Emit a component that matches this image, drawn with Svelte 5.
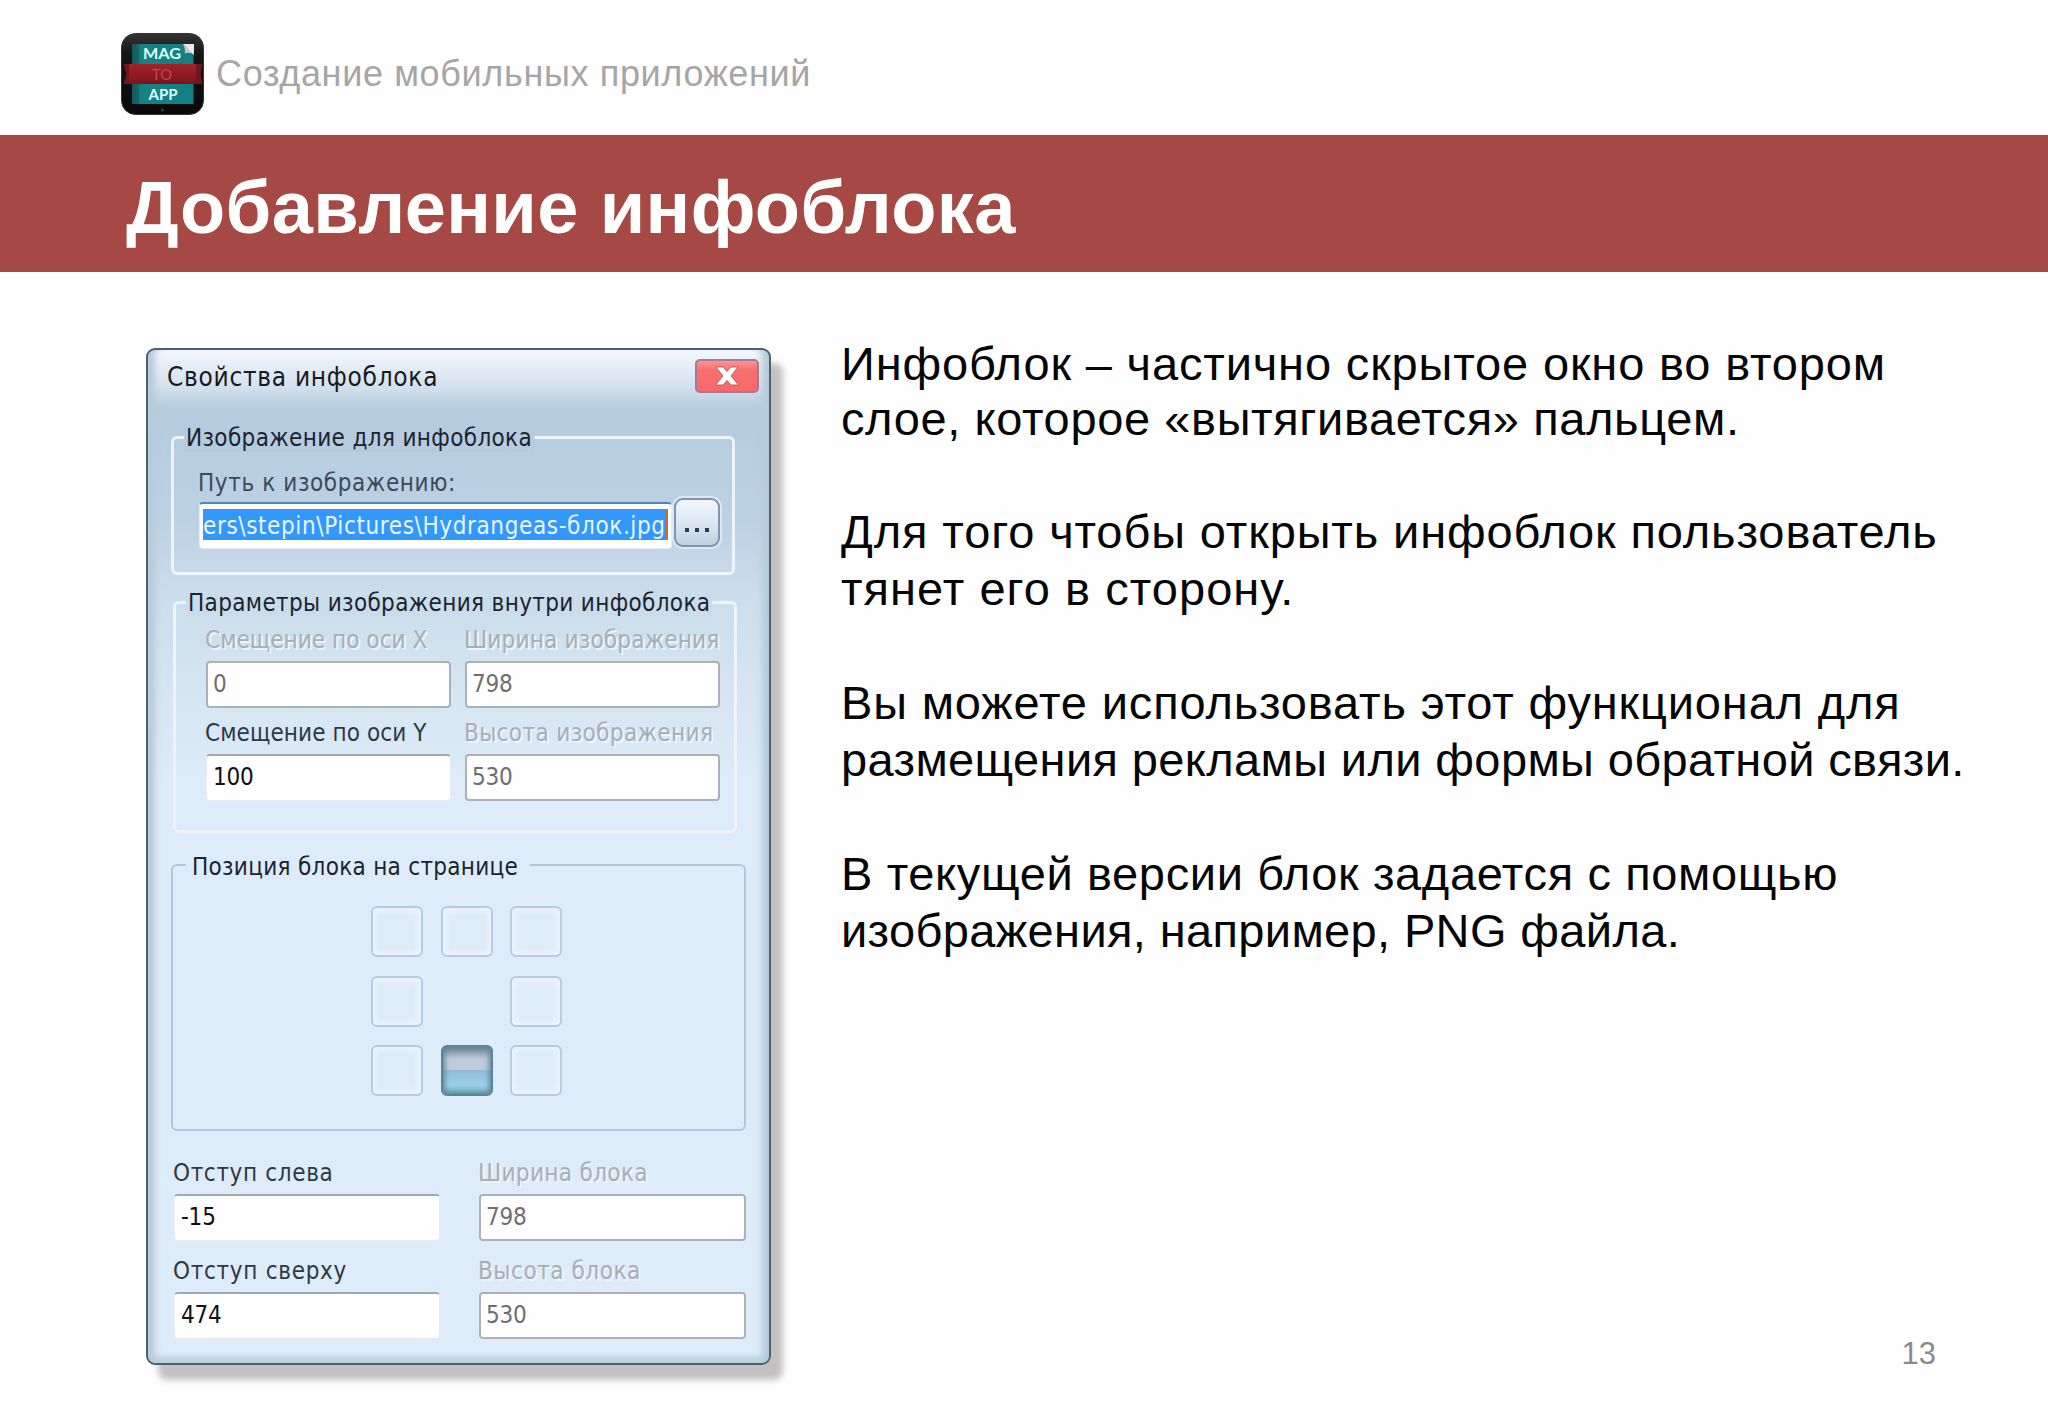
<script lang="ts">
	interface Line {
		text: string;
		tracking: number;
	}

	interface Field {
		label: string;
		value: string;
		tracking: number;
		disabled?: boolean;
	}

	const paragraphs: Line[][] = [
		[
			{ text: 'Инфоблок – частично скрытое окно во втором', tracking: 0.85 },
			{ text: 'слое, которое «вытягивается» пальцем.', tracking: 0.62 }
		],
		[
			{ text: 'Для того чтобы открыть инфоблок пользователь', tracking: 0.88 },
			{ text: 'тянет его в сторону.', tracking: 1.05 }
		],
		[
			{ text: 'Вы можете использовать этот функционал для', tracking: 0.84 },
			{ text: 'размещения рекламы или формы обратной связи.', tracking: 0.37 }
		],
		[
			{ text: 'В текущей версии блок задается с помощью', tracking: 0.63 },
			{ text: 'изображения, например, PNG файла.', tracking: 0.36 }
		]
	];

	const imageFields: Field[] = [
		{ label: 'Смещение по оси X', value: '0', tracking: 0.05, disabled: true },
		{ label: 'Ширина изображения', value: '798', tracking: 0.2, disabled: true },
		{ label: 'Смещение по оси Y', value: '100', tracking: 0.1 },
		{ label: 'Высота изображения', value: '530', tracking: 0.38, disabled: true }
	];

	const blockFields: Field[] = [
		{ label: 'Отступ слева', value: '-15', tracking: 0.65 },
		{ label: 'Ширина блока', value: '798', tracking: 0.35, disabled: true },
		{ label: 'Отступ сверху', value: '474', tracking: 0.7 },
		{ label: 'Высота блока', value: '530', tracking: 0.55, disabled: true }
	];

	const cells = [0, 1, 2, 3, 4, 5, 6, 7, 8];
	let selected = $state(7);
</script>

{#snippet field(item: Field)}
	<div class="field" class:disabled={item.disabled}>
		<span class="label" style:letter-spacing="{item.tracking}px">{item.label}</span>
		<div class="input">{item.value}</div>
	</div>
{/snippet}

<div class="slide">
	<header>
		<svg class="logo" viewBox="0 0 84 84">
			<defs>
				<linearGradient id="case" x1="0" y1="0" x2="0" y2="1">
					<stop offset="0" stop-color="#343434" />
					<stop offset="0.25" stop-color="#151515" />
					<stop offset="1" stop-color="#090909" />
				</linearGradient>
				<linearGradient id="cover" x1="0" y1="0" x2="1" y2="0">
					<stop offset="0" stop-color="#17595b" />
					<stop offset="0.1" stop-color="#126567" />
					<stop offset="0.14" stop-color="#188184" />
					<stop offset="1" stop-color="#108083" />
				</linearGradient>
				<linearGradient id="ribbon" x1="0" y1="0" x2="0" y2="1">
					<stop offset="0" stop-color="#a3222b" />
					<stop offset="1" stop-color="#7c151b" />
				</linearGradient>
				<linearGradient id="curl" x1="1" y1="0" x2="0" y2="1">
					<stop offset="0.3" stop-color="#f4f4f4" />
					<stop offset="0.7" stop-color="#bdbdbd" />
				</linearGradient>
			</defs>
			<rect x="0.5" y="0.5" width="82" height="81" rx="14" fill="url(#case)" stroke="#333" stroke-width="1" />
			<rect x="11" y="11" width="61.500" height="60" fill="url(#cover)" />
			<path d="M62 11 H73 V22 Z" fill="#e9e9e9" />
			<path d="M61.500 11 Q65 15 63.500 20.500 Q69 18.500 73 21.500 Z" fill="url(#curl)" />
			<path d="M2.500 31 H81.500 L79.500 41 L81.500 51 H2.500 L5.500 41 Z" fill="#6e161c" />
			<rect x="8" y="31" width="67" height="19.500" fill="url(#ribbon)" />
			<text x="41" y="26.300" textLength="38" lengthAdjust="spacingAndGlyphs" class="big">MAG</text>
			<text x="41" y="46.500" textLength="20" lengthAdjust="spacingAndGlyphs" class="to">TO</text>
			<text x="42" y="67" textLength="29" lengthAdjust="spacingAndGlyphs" class="big">APP</text>
			<circle cx="41.500" cy="77" r="1.600" fill="#393939" />
		</svg>
		<span class="brand">Создание мобильных приложений</span>
	</header>

	<div class="banner"><h1>Добавление инфоблока</h1></div>

	<main>
		<section class="dialog">
			<div class="titlebar">
				<span>Свойства инфоблока</span>
				<button class="close" aria-label="Закрыть">
					<svg viewBox="0 0 24 20"><path d="M1 1H8L12 5.500L16 1H23L16 10L23.500 19H16L12 14.500L8 19H0.500L8 10Z" fill="#fff" stroke="#9d5262" stroke-width="0.800" /></svg>
				</button>
			</div>

			<div class="group source">
				<span class="legend">Изображение для инфоблока</span>
				<span class="label">Путь к изображению:</span>
				<div class="row">
					<div class="input path"><span class="selection">ers\stepin\Pictures\Hydrangeas-блок.jpg</span></div>
					<button class="browse" aria-label="Обзор"><i></i><i></i><i></i></button>
				</div>
			</div>

			<div class="group params">
				<span class="legend">Параметры изображения внутри инфоблока</span>
				{#each imageFields as item}
					{@render field(item)}
				{/each}
			</div>

			<div class="group position">
				<span class="legend">Позиция блока на странице</span>
				<div class="cells">
					{#each cells as cell}
						{#if cell === 4}
							<span></span>
						{:else}
							<button class="cell" class:selected={cell === selected} aria-label="Позиция {cell}" onclick={() => (selected = cell)}></button>
						{/if}
					{/each}
				</div>
			</div>

			<div class="block">
				{#each blockFields as item}
					{@render field(item)}
				{/each}
			</div>
		</section>

		<article>
			{#each paragraphs as lines}
				<p>
					{#each lines as line}
						<span style:letter-spacing="{line.tracking}px">{line.text}</span>
					{/each}
				</p>
			{/each}
		</article>
	</main>

	<footer>13</footer>
</div>

<style>
	:global(body) {
		background: #fefefe;
	}
	.slide {
		width: 2048px;
		height: 1418px;
		display: grid;
		grid-template-rows: 135px 137px minmax(0, 1fr) 88px;
		font-family: 'Liberation Sans', Arial, sans-serif;
		overflow: hidden;
	}
	.slide * {
		box-sizing: border-box;
		white-space: nowrap;
	}
	button {
		padding: 0;
		margin: 0;
	}
	header {
		display: flex;
		align-items: flex-start;
		padding: 33px 0 0 121px;
	}
	.logo {
		width: 84px;
		height: 84px;
	}
	.logo text {
		font-family: Lato, sans-serif;
		font-size: 16px;
		text-anchor: middle;
	}
	.logo .big {
		fill: #dcffff;
		font-weight: 700;
	}
	.logo .to {
		fill: #c0474c;
	}
	.brand {
		margin: 20px 0 0 11px;
		font-size: 36px;
		line-height: 41px;
		letter-spacing: 0.650px;
		color: #a6a6a6;
	}
	.banner {
		background: #a64944;
		padding: 33px 0 0 126px;
	}
	h1 {
		margin: 0;
		font-size: 74px;
		line-height: 80px;
		font-weight: 700;
		letter-spacing: 0.400px;
		color: #fff;
	}
	main {
		display: flex;
		align-items: flex-start;
		padding: 76px 0 0 146px;
	}
	article {
		margin: -12px 0 0 70px;
		font-size: 47px;
		line-height: 57px;
		color: #060606;
	}
	p {
		margin: 0 0 57px;
	}
	p:first-child {
		line-height: 55px;
	}
	p span {
		display: block;
	}
	footer {
		padding: 6px 112px 0 0;
		text-align: right;
		font-size: 31px;
		line-height: 36px;
		color: #8b8b8b;
	}

	.dialog {
		width: 625px;
		height: 1017px;
		flex: none;
		display: flex;
		flex-direction: column;
		padding: 0 0 0 23px;
		border: 2px solid #4d606e;
		border-radius: 9px;
		background: linear-gradient(#f3f7fc 0, #d5e3ef 35px, #bdd0e0 53px, #b4cbde 60px, #bdd1e4 170px, #cbdceb 240px, #d2e3ef 310px, #deebf8 430px);
		box-shadow:
			inset -12px 0 6px -5px #b7ccdb,
			inset 12px 0 6px -5px #b7ccdb,
			inset 0 -13px 5px -6px #bed4e0,
			12px 15px 6px #c3c1c2;
		font-family: 'DejaVu Sans Condensed', 'DejaVu Sans', sans-serif;
		font-stretch: condensed;
		font-size: 24px;
		line-height: 28px;
		color: #2c3946;
	}
	.titlebar {
		height: 86px;
		display: flex;
		align-items: flex-start;
		justify-content: space-between;
		padding-right: 10px;
	}
	.titlebar > span {
		margin: 13px 0 0 -4px;
		font-size: 26px;
		letter-spacing: 0.700px;
		color: #1a1a20;
	}
	.close {
		width: 64px;
		height: 34px;
		margin-top: 9px;
		border: 2px solid #a67a95;
		border-radius: 5px;
		background: linear-gradient(#fb9494, #f87070 30%, #fb6868);
		display: flex;
		align-items: center;
		justify-content: center;
	}
	.close svg {
		width: 24px;
		height: 20px;
	}
	.group {
		position: relative;
		border: 3px solid #eef4fa;
		border-radius: 6px;
	}
	/* the caption sits on the frame and hides the line under it */
	.legend {
		position: absolute;
		left: 10px;
		top: -15px;
		padding: 0 2px;
		letter-spacing: 0.350px;
		color: #1b2430;
	}
	.source {
		width: 564px;
		height: 139px;
		padding: 30px 0 0 24px;
	}
	.source .legend {
		background: #b6cbdf;
		letter-spacing: 0.360px;
	}
	.source .label {
		display: block;
		letter-spacing: 0.600px;
		color: #3c4a5d;
	}
	.row {
		display: flex;
		margin: 5px 0 0 1px;
		gap: 2px;
	}
	.input {
		height: 47px;
		padding: 7px 5px 0;
		background: #fefefe;
		border: 1px solid #e6ecf2;
		border-top: 2px solid #9fa9b5;
		border-radius: 4px;
		letter-spacing: -0.200px;
		color: #101018;
	}
	.field:not(.disabled) .input {
		padding-left: 6px;
	}
	.disabled .input {
		border: 2px solid #abb1b9;
		color: #6f6f72;
	}
	.path {
		width: 473px;
		padding: 5px 3px 0;
		border-top-color: #4f84b5;
	}
	.selection {
		display: block;
		width: 465px;
		height: 31px;
		border-right: 3px solid #c07030;
		background: #3398fd;
		color: #eaf5ff;
		line-height: 34px;
		letter-spacing: 0.620px;
		overflow: hidden;
	}
	.browse {
		width: 46px;
		height: 49px;
		margin-top: -4px;
		display: flex;
		align-items: flex-end;
		justify-content: center;
		gap: 6px;
		padding-bottom: 13px;
		border: 2px solid #8295b0;
		border-radius: 9px;
		background: linear-gradient(#f2f7fc, #dce8f3 50%, #c0d0e0);
		box-shadow: 0 0 0 2px #dce8f3;
	}
	.browse i {
		width: 4px;
		height: 4px;
		background: #383a55;
	}
	.params {
		width: 564px;
		height: 232px;
		margin: 26px 0 0 2px;
		padding: 22px 0 0 30px;
		display: grid;
		grid-template-columns: 245px 255px;
		grid-template-rows: 93px 93px;
		column-gap: 14px;
	}
	.params .legend {
		background: #cbdceb;
	}
	.field {
		display: flex;
		flex-direction: column;
		gap: 7px;
	}
	.field .label {
		margin-left: -1px;
	}
	.disabled .label {
		color: #a8afb6;
		text-shadow: 2px 2px 0 #edf4fa;
	}
	.position {
		width: 575px;
		height: 267px;
		margin-top: 31px;
		border: 2px solid #b4c6de;
		padding: 40px 0 0 198px;
	}
	.position .legend {
		left: 13px;
		top: -13px;
		padding: 0 12px 0 6px;
		letter-spacing: 0.300px;
		background: #deebf8;
	}
	.cells {
		display: grid;
		grid-template-columns: repeat(3, 52px);
		grid-auto-rows: 51px;
		gap: 18.500px 17.500px;
	}
	.cell {
		border: 2px solid #b9cbe2;
		border-radius: 6px;
		background: #deebf8;
		box-shadow: inset 0 0 6px 3px #edf5fc;
	}
	.cell.selected {
		border-color: #5f8397;
		background: linear-gradient(#75899a, #c0cbdc 27%, #bccbdd 48%, #91bbd6 49%, #9bcfe8 80%, #78b8cc);
		box-shadow: inset 0 0 5px 2px #5d8799;
	}
	.block {
		display: grid;
		grid-template-columns: 266px 267px;
		grid-auto-rows: 97.500px;
		column-gap: 39px;
		padding: 28px 0 0 3px;
	}
</style>
